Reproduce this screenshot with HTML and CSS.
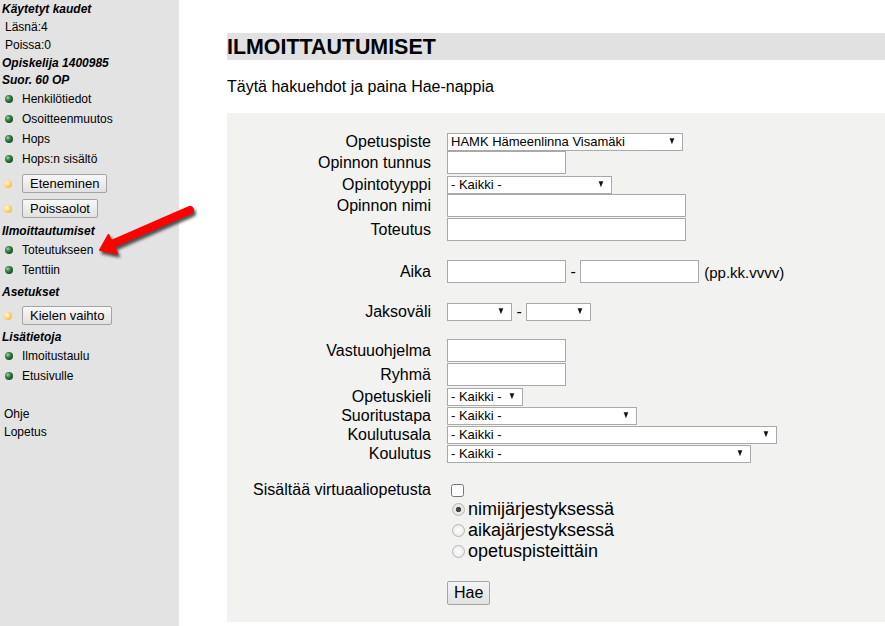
FILE: index.html
```html
<!DOCTYPE html>
<html lang="fi">
<head>
  <meta charset="UTF-8">
  <title>Ilmoittautumiset</title>
  <link rel="stylesheet" href="styles.css">
</head>
<body>
<div class="page">

  <div class="sidebar">
    <div class="sb-head">Käytetyt kaudet</div>
    <div class="sb-text">Läsnä:4</div>
    <div class="sb-text">Poissa:0</div>
    <div class="sb-head">Opiskelija 1400985</div>
    <div class="sb-head short">Suor. 60 OP</div>
    <a class="sb-link" href="#"><span class="dot green"></span>Henkilötiedot</a>
    <a class="sb-link" href="#"><span class="dot green"></span>Osoitteenmuutos</a>
    <a class="sb-link" href="#"><span class="dot green"></span>Hops</a>
    <a class="sb-link" href="#"><span class="dot green"></span>Hops:n sisältö</a>
    <div class="sb-btnrow"><span class="dot yellow"></span><button class="sb-btn">Eteneminen</button></div>
    <div class="sb-btnrow"><span class="dot yellow"></span><button class="sb-btn">Poissaolot</button></div>
    <div class="sb-head gap">Ilmoittautumiset</div>
    <a class="sb-link" href="#"><span class="dot green"></span>Toteutukseen</a>
    <a class="sb-link" href="#"><span class="dot green"></span>Tenttiin</a>
    <div class="sb-head gap">Asetukset</div>
    <div class="sb-btnrow"><span class="dot yellow"></span><button class="sb-btn">Kielen vaihto</button></div>
    <div class="sb-head gap-sm">Lisätietoja</div>
    <a class="sb-link" href="#"><span class="dot green"></span>Ilmoitustaulu</a>
    <a class="sb-link" href="#"><span class="dot green"></span>Etusivulle</a>
    <a class="sb-plain spaced" href="#">Ohje</a>
    <a class="sb-plain" href="#">Lopetus</a>
  </div>

  <div class="main">
    <h1 class="title">ILMOITTAUTUMISET</h1>
    <p class="intro">Täytä hakuehdot ja paina Hae-nappia</p>

    <form class="panel">
      <div class="row">
        <label class="lbl">Opetuspiste</label>
        <div class="field"><span class="sel w236"><select><option>HAMK Hämeenlinna Visamäki</option></select></span></div>
      </div>
      <div class="row">
        <label class="lbl">Opinnon tunnus</label>
        <div class="field"><input class="txt w119" type="text"></div>
      </div>
      <div class="row">
        <label class="lbl">Opintotyyppi</label>
        <div class="field"><span class="sel w165"><select><option>- Kaikki -</option></select></span></div>
      </div>
      <div class="row">
        <label class="lbl">Opinnon nimi</label>
        <div class="field"><input class="txt w239" type="text"></div>
      </div>
      <div class="row">
        <label class="lbl">Toteutus</label>
        <div class="field"><input class="txt w239" type="text"></div>
      </div>

      <div class="spacer"></div>
      <div class="row">
        <label class="lbl">Aika</label>
        <div class="field"><input class="txt w119" type="text"> - <input class="txt w119" type="text"><span class="hint">(pp.kk.vvvv)</span></div>
      </div>

      <div class="spacer"></div>
      <div class="row">
        <label class="lbl">Jaksoväli</label>
        <div class="field"><span class="sel w65"><select><option></option></select></span> - <span class="sel w65"><select><option></option></select></span></div>
      </div>

      <div class="spacer"></div>
      <div class="row">
        <label class="lbl">Vastuuohjelma</label>
        <div class="field"><input class="txt w119" type="text"></div>
      </div>
      <div class="row">
        <label class="lbl">Ryhmä</label>
        <div class="field"><input class="txt w119" type="text"></div>
      </div>
      <div class="row">
        <label class="lbl">Opetuskieli</label>
        <div class="field"><span class="sel w76"><select><option>- Kaikki -</option></select></span></div>
      </div>
      <div class="row">
        <label class="lbl">Suoritustapa</label>
        <div class="field"><span class="sel w190"><select><option>- Kaikki -</option></select></span></div>
      </div>
      <div class="row">
        <label class="lbl">Koulutusala</label>
        <div class="field"><span class="sel w330"><select><option>- Kaikki -</option></select></span></div>
      </div>
      <div class="row">
        <label class="lbl">Koulutus</label>
        <div class="field"><span class="sel w304"><select><option>- Kaikki -</option></select></span></div>
      </div>

      <div class="spacer"></div>
      <div class="row">
        <label class="lbl">Sisältää virtuaaliopetusta</label>
        <div class="field"><input class="chk" type="checkbox"></div>
      </div>
      <div class="row">
        <span class="lbl"></span>
        <div class="field radios">
          <label class="opt"><input type="radio" name="jarj" checked>nimijärjestyksessä</label>
          <label class="opt"><input type="radio" name="jarj">aikajärjestyksessä</label>
          <label class="opt"><input type="radio" name="jarj">opetuspisteittäin</label>
        </div>
      </div>
      <div class="row">
        <span class="lbl"></span>
        <div class="field"><button class="hae" type="button">Hae</button></div>
      </div>
    </form>
  </div>
</div>

<svg class="arrow" width="112" height="72" viewBox="0 0 112 72">
  <defs>
    <filter id="blur" x="-20%" y="-20%" width="140%" height="140%">
      <feGaussianBlur stdDeviation="1.6"/>
    </filter>
  </defs>
  <g fill="#1a1a1a" stroke="#1a1a1a" opacity="0.75" filter="url(#blur)" transform="translate(2,3)">
    <line x1="22" y1="49" x2="100" y2="15" stroke-width="8" stroke-linecap="round"/>
    <polygon points="10,55 27,58.5 18.5,40" stroke-width="2" stroke-linejoin="round"/>
  </g>
  <g fill="#f00" stroke="#f00">
    <line x1="22" y1="49" x2="100" y2="15" stroke-width="8" stroke-linecap="round"/>
    <polygon points="10,55 27,58.5 18.5,40" stroke-width="2" stroke-linejoin="round"/>
  </g>
</svg>
</body>
</html>
```

FILE: styles.css
```css
html, body {
  margin: 0;
  padding: 0;
}
body {
  font-family: "Liberation Sans", Arial, sans-serif;
  color: #000;
  background: #fff;
  position: relative;
}
.page {
  display: flex;
  min-height: 100vh;
}

/* vasen valikko */
.sidebar {
  width: 179px;
  flex: none;
  background: #e3e3e3;
  font-size: 12px;
}
.sb-head {
  font-weight: bold;
  font-style: italic;
  line-height: 18px;
  padding-left: 2px;
}
.sb-head.short {
  line-height: 17px;
}
.sb-head.gap {
  margin-top: 3px;
}
.sb-head.gap-sm {
  margin-top: 2px;
}
.sb-text {
  line-height: 18px;
  padding-left: 5px;
}
.sb-link {
  display: flex;
  align-items: center;
  height: 20px;
  color: #000;
  text-decoration: none;
}
.sb-plain {
  display: block;
  line-height: 18px;
  padding-left: 4px;
  color: #000;
  text-decoration: none;
}
.sb-plain.spaced {
  margin-top: 19px;
}
.dot {
  width: 8px;
  height: 8px;
  border-radius: 50%;
  margin: 0 9px 0 5px;
  flex: none;
}
.dot.green {
  background: radial-gradient(circle at 35% 35%, #a9d8b2 0, #3f8a50 30%, #1a4f26 70%, #0f3317 100%);
}
.dot.yellow {
  margin-left: 4px;
  margin-right: 10px;
  background: radial-gradient(circle at 35% 35%, #fffbe2 0, #ffe08a 35%, #f0b43c 80%, #e0a030 100%);
}
.sb-btnrow {
  display: flex;
  align-items: flex-start;
  height: 25px;
  padding-top: 5px;
  box-sizing: border-box;
}
.sb-btnrow .dot {
  margin-top: 6px;
}
.sb-btn {
  height: 19px;
  padding: 0 7px;
  font-family: inherit;
  font-size: 13px;
  color: #000;
  border: 1px solid #a3a3a3;
  border-radius: 2px;
  background: linear-gradient(#f8f8f8, #e1e1e1);
  line-height: 15px;
}

/* sisältö */
.main {
  flex: 1;
  padding: 33px 0 0 48px;
}
.title {
  margin: 0;
  height: 27px;
  line-height: 28px;
  font-size: 21.4px;
  font-weight: bold;
  background: #e1e1e1;
}
.intro {
  margin: 18px 0 17px;
  font-size: 16px;
  line-height: 18px;
}
.panel {
  background: #f2f2f1;
  padding: 19px 0 17px;
  margin: 0;
}
.row {
  display: grid;
  grid-template-columns: 204px 1fr;
  column-gap: 16px;
  align-items: center;
}
.lbl {
  text-align: right;
  font-size: 16px;
  line-height: 18px;
}
.field {
  font-size: 16px;
  display: flex;
  align-items: center;
  white-space: pre;
}
.spacer {
  height: 18px;
}
.txt {
  box-sizing: border-box;
  height: 23px;
  margin: 0 0 1px;
  padding: 1px 3px;
  border: 1px solid #a9a9a9;
  background: #fff;
  font-family: inherit;
  font-size: 13px;
}
.w119 { width: 119px; }
.w239 { width: 239px; }
.hint {
  margin-left: 5px;
  font-size: 15px;
}

.sel {
  position: relative;
  display: inline-block;
  height: 18px;
  margin-bottom: 1px;
}
.sel select {
  appearance: none;
  -webkit-appearance: none;
  box-sizing: border-box;
  width: 100%;
  height: 18px;
  margin: 0;
  padding: 0 16px 0 3px;
  border: 1px solid #a9a9a9;
  border-radius: 0;
  background: #fff;
  font-family: inherit;
  font-size: 13px;
  line-height: 16px;
  color: #000;
}
.sel::after {
  content: "\25BC";
  position: absolute;
  right: 6px;
  top: 4px;
  font-size: 10px;
  line-height: 10px;
  transform: scaleX(0.8);
  color: #111;
  pointer-events: none;
}
.w65 { width: 65px; }
.w76 { width: 76px; }
.w165 { width: 165px; }
.w190 { width: 190px; }
.w236 { width: 236px; }
.w304 { width: 304px; }
.w330 { width: 330px; }

.chk {
  width: 13px;
  height: 13px;
  margin: 3px 3px 2px 4px;
}
.radios {
  flex-direction: column;
  align-items: flex-start;
}
.opt {
  display: flex;
  align-items: center;
  height: 21px;
  font-size: 18px;
}
.opt input {
  appearance: none;
  -webkit-appearance: none;
  width: 13px;
  height: 13px;
  margin: 0 3px 0 5px;
  border: 1px solid #b5b5b5;
  border-radius: 50%;
  background: radial-gradient(circle, #fff 0, #e4e4e4 100%);
}
.opt input:checked {
  background: radial-gradient(circle, #444 0, #444 2.3px, #e8e8e8 3px);
}
.hae {
  margin-top: 19px;
  height: 24px;
  padding: 0 6px;
  font-family: inherit;
  font-size: 16px;
  color: #000;
  border: 1px solid #a5a5a5;
  border-radius: 2px;
  background: linear-gradient(#f4f4f4, #e2e2e2);
}

/* nuoli */
.arrow {
  position: absolute;
  left: 90px;
  top: 195px;
}
```
